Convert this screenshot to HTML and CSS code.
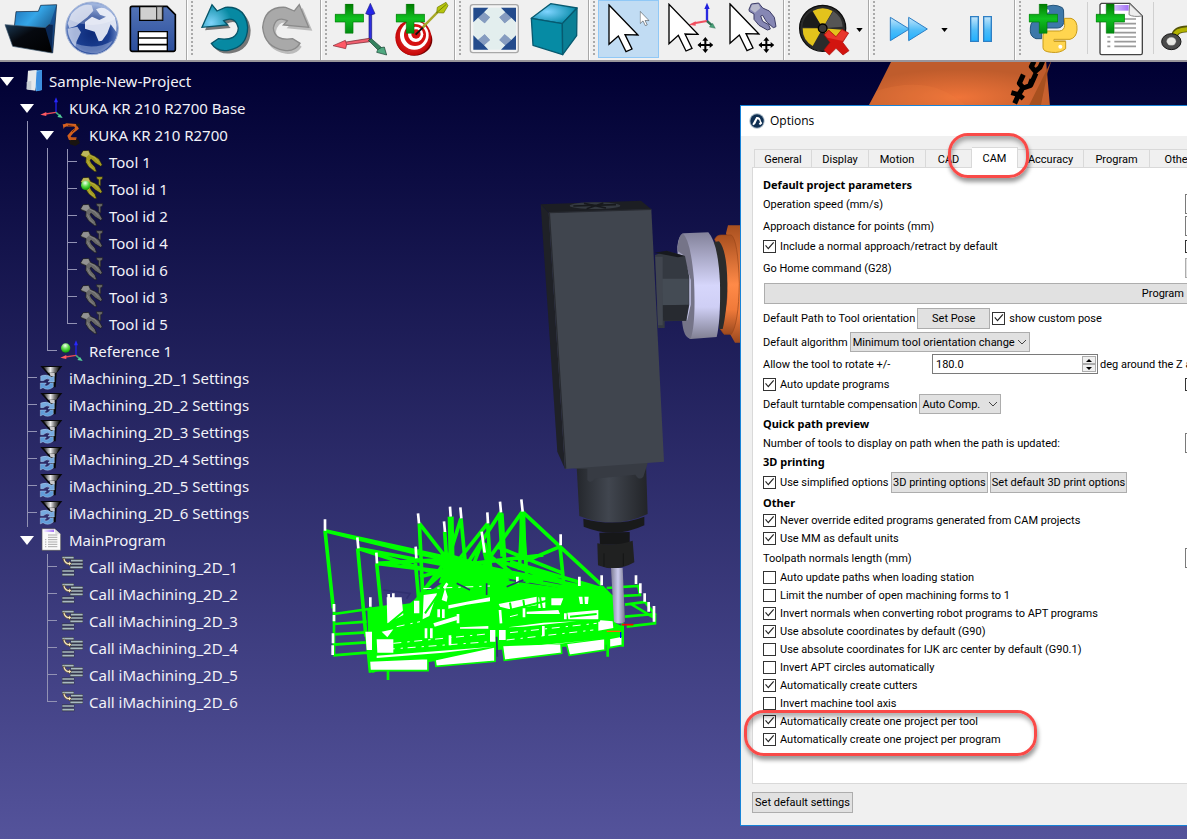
FILE: index.html
```html
<!DOCTYPE html>
<html lang="en">
<head>
<meta charset="utf-8">
<title>Sample-New-Project</title>
<link rel="stylesheet" href="styles.css">
</head>
<body>
<svg class="defs" aria-hidden="true">
  <defs>
    <linearGradient id="gFolder" x1="0" y1="0" x2="1" y2="1"><stop offset="0" stop-color="#1d6fb5"/><stop offset=".35" stop-color="#35a6e8"/><stop offset="1" stop-color="#04173c"/></linearGradient>
    <linearGradient id="gFront" x1="0" y1="0" x2="1" y2="1"><stop offset="0" stop-color="#1b3a55"/><stop offset=".4" stop-color="#06090f"/><stop offset="1" stop-color="#000"/></linearGradient>
    <radialGradient id="gGlobe" cx=".5" cy=".6" r=".55"><stop offset="0" stop-color="#0d2a78"/><stop offset=".6" stop-color="#1c3f92"/><stop offset="1" stop-color="#7f9bd2"/></radialGradient>
    <linearGradient id="gFloppy" x1="0" y1="0" x2="0" y2="1"><stop offset="0" stop-color="#5273b6"/><stop offset="1" stop-color="#2b4e9c"/></linearGradient>
    <radialGradient id="gUndo" cx=".2" cy=".4" r=".45"><stop offset="0" stop-color="#7fd4fa"/><stop offset="1" stop-color="#0789a2"/></radialGradient>
    <linearGradient id="gPlus" x1="0" y1="0" x2="0" y2="1"><stop offset="0" stop-color="#007a00"/><stop offset=".5" stop-color="#10c020"/><stop offset="1" stop-color="#008a10"/></linearGradient>
    <radialGradient id="gCube" cx=".35" cy=".4" r=".6"><stop offset="0" stop-color="#7fd4ff"/><stop offset="1" stop-color="#0e8fae"/></radialGradient>
    <linearGradient id="gPlay" x1="0" y1="0" x2="0" y2="1"><stop offset="0" stop-color="#c5e6fb"/><stop offset=".55" stop-color="#4fbcf8"/><stop offset="1" stop-color="#20b0ff"/></linearGradient>
    <linearGradient id="gPage" x1="0" y1="0" x2="1" y2="0"><stop offset="0" stop-color="#fff"/><stop offset=".15" stop-color="#efe8ff"/><stop offset="1" stop-color="#a371f5"/></linearGradient>
    <radialGradient id="gBall" cx=".45" cy=".25" r=".75"><stop offset="0" stop-color="#f0fff0"/><stop offset=".5" stop-color="#5fdc4a"/><stop offset="1" stop-color="#0c9a00"/></radialGradient>
    <linearGradient id="gSteel" x1="0" y1="0" x2="1" y2="0"><stop offset="0" stop-color="#111"/><stop offset=".45" stop-color="#eee"/><stop offset=".7" stop-color="#777"/><stop offset="1" stop-color="#111"/></linearGradient>
    <linearGradient id="gFlange" x1="0" y1="0" x2="0" y2="1"><stop offset="0" stop-color="#83829a"/><stop offset=".5" stop-color="#d6d6fb"/><stop offset=".7" stop-color="#cfcff5"/><stop offset="1" stop-color="#807f92"/></linearGradient>
    <linearGradient id="gOrange" x1="0" y1="0" x2="0" y2="1"><stop offset="0" stop-color="#a9501f"/><stop offset=".5" stop-color="#ff8a48"/><stop offset=".75" stop-color="#f07a3a"/><stop offset="1" stop-color="#9c4a1f"/></linearGradient>
    <radialGradient id="gArm" cx=".5" cy=".8" r=".6"><stop offset="0" stop-color="#ef7439"/><stop offset="1" stop-color="#bf5c2c"/></radialGradient>
    <linearGradient id="gSpindle" x1="0" y1="0" x2="1" y2="0"><stop offset="0" stop-color="#24272c"/><stop offset=".45" stop-color="#41464f"/><stop offset="1" stop-color="#222428"/></linearGradient>
    <linearGradient id="gCutter" x1="0" y1="0" x2="1" y2="0"><stop offset="0" stop-color="#7f7e96"/><stop offset=".5" stop-color="#ccccee"/><stop offset="1" stop-color="#77768c"/></linearGradient>
    <radialGradient id="gTarget" cx=".5" cy=".5" r=".5"><stop offset="0" stop-color="#ff5050"/><stop offset="1" stop-color="#c40606"/></radialGradient>
    <symbol id="plus" viewBox="0 0 88 90"><path d="M32 1H55V32H87V55H55V89H32V55H1V32H32Z" fill="url(#gPlus)" stroke="#007a08" stroke-width="2"/></symbol>
    <symbol id="cursor" viewBox="0 0 94 150"><path d="M3 4V122L31 97L54 144L72 136L51 93L90 94Z" fill="#fff" stroke="#000" stroke-width="4"/></symbol>
    <symbol id="move" viewBox="0 0 48 48"><path d="M24 0L33 11H27V21H37V15L48 24L37 33V27H27V37H33L24 48L15 37H21V27H11V33L0 24L11 15V21H21V11H15Z" fill="#000"/></symbol>
    <symbol id="i-frame" viewBox="0 0 66 81" overflow="visible"><path d="M48 52V20" stroke="#2020e8" stroke-width="4"/><path d="M48 7L42 22H54Z" fill="#2828ff"/><path d="M48 52L16 57" stroke="#e84a58" stroke-width="4"/><path d="M1 59L19 51L19 63Z" fill="#ff5a62"/><path d="M48 52L60 63" stroke="#3fae80" stroke-width="5"/><path d="M68 69L52 66L60 57Z" fill="#55d09a"/></symbol>
    <symbol id="i-grip" viewBox="0 0 66 81" overflow="visible"><path d="M2 17L9 5L26 4L32 16L44 21L57 30L67 48L62 52L46 42L34 31L30 33L34 42L45 54L50 68L44 68L26 54L17 40L18 26L4 21Z" fill="currentColor" stroke="#16161a" stroke-width="2"/><path d="M4 17L10 7L25 6L29 15L19 24Z" fill="#fff" opacity=".28"/><path d="M22 34L30 50L40 60" fill="none" stroke="#fff" stroke-width="3" opacity=".18"/><path d="M28 18L44 26L56 40" fill="none" stroke="#fff" stroke-width="3" opacity=".18"/></symbol>
    <symbol id="i-toolid" viewBox="0 0 66 81" overflow="visible"><use href="#i-grip" width="66" height="81"/><path d="M49 2H68L67 9L62 11V30L56 26V11L51 9Z" fill="currentColor" stroke="#222" stroke-width="2"/></symbol>
    <symbol id="i-settings" viewBox="0 0 66 81" overflow="visible"><path d="M1 3H67L60 12L50 24L47 67H35L32 40L22 26L9 12Z" fill="#08080a"/><path d="M10 6H58L49 23H25Z" fill="url(#gSteel)"/><path d="M28 24H44V34H32Z" fill="#c9c9cc"/><path d="M2 47V33Q20 26 35 37L43 32V51H24L30 44Q20 38 10 47Z" fill="#77aadf" stroke="#dcecff"/><path d="M40 53V66Q24 79 9 68L1 72V54H19L13 61Q23 67 31 54Z" fill="#5f9bd8" stroke="#dcecff"/></symbol>
    <symbol id="i-call" viewBox="0 0 66 81" overflow="visible"><g fill="none" stroke="#30333c" stroke-width="9"><path d="M6 11H42M32 20H69M32 30H69M30 40H69M6 51H43M6 62H43"/></g><g fill="none" stroke="#a9bac2" stroke-width="5"><path d="M7 11H41M33 20H68M33 30H68M31 40H68M7 51H42M7 62H42"/></g><path d="M14 12Q16 26 27 26V21L34 29L27 36V32Q12 31 9 14Z" fill="#fff0c8" stroke="#5b4a2c" stroke-width="2"/></symbol>
  </defs>
</svg>

<div class="toolbar" role="toolbar" aria-label="Main tools">
  <div class="group group-first">
    <button class="tool" aria-label="Open"><svg viewBox="3 0 183 180"><path d="M43 80L48 35L115 34L122 16L170 14L158 159Z" fill="url(#gFolder)" stroke="#061a33" stroke-width="2"/><path d="M15 74L136 83L148 73L160 74L156 159L38 139Z" fill="url(#gFront)" stroke="#3d566c" stroke-width="2"/><path d="M136 84L149 75L169 16L157 157Z" fill="#0d3d86" opacity=".6"/></svg></button>
    <button class="tool" aria-label="Online library"><svg viewBox="186 0 183 180"><circle cx="276" cy="85" r="79" fill="url(#gGlobe)" stroke="#a9b8d8" stroke-width="3"/><path d="M214 42Q245 8 275 16L280 32L262 52L248 62L228 78L208 84L203 70Z" fill="#cdd5ea" opacity=".9"/><path d="M288 28Q316 12 345 52Q352 75 349 96L332 73L322 100L306 122L296 124L284 95L255 86L255 66L276 50L298 60L318 50L300 44Z" fill="#e6eaf6" opacity=".95"/><path d="M203 86L232 80L243 97L230 124L226 140Q204 116 203 86Z" fill="#cbd5ec" opacity=".8"/><path d="M214 124Q276 156 338 122Q318 160 276 160Q235 158 214 124Z" fill="#b9c8e8" opacity=".45"/><path d="M206 58Q276 92 346 58Q330 10 276 9Q223 12 206 58Z" fill="#fff" opacity=".25"/></svg></button>
    <button class="tool" aria-label="Save"><svg viewBox="369 0 183 180"><path d="M396 19H501L526 44V148Q526 154 520 154H397Q391 154 391 148V25Q391 19 396 19Z" fill="url(#gFloppy)" stroke="#000" stroke-width="5"/><path d="M419 20H488V61H419Z" fill="#cfcfcf" stroke="#000" stroke-width="4"/><path d="M470 20H487V60H470Z" fill="#bdbdbd" stroke="#222" stroke-width="3"/><path d="M415 95H502V153H415Z" fill="#fff" stroke="#000" stroke-width="4"/><path d="M415 114H502M415 134H502" stroke="#000" stroke-width="5"/></svg></button>
  </div>
  <div class="group">
    <span class="handle"></span>
    <button class="tool" aria-label="Undo"><svg viewBox="588 0 183 180"><path d="M636 14L606 82L683 75L671 62Q706 46 715 84Q712 124 655 118L634 132Q650 156 685 151Q742 142 743 82Q737 18 676 22L651 33Z" fill="#777" transform="translate(9 9)"/><path d="M636 14L606 82L683 75L671 62Q706 46 715 84Q712 124 655 116L634 130Q650 156 685 151Q742 142 743 82Q737 18 676 22L651 33Z" fill="url(#gUndo)" stroke="#065468" stroke-width="4"/></svg></button>
    <button class="tool" aria-label="Redo"><svg viewBox="771 0 183 180"><path d="M903 14L932 82L855 75L867 62Q832 46 823 84Q826 124 883 116L900 130Q884 156 853 151Q794 142 788 82Q794 18 862 22L888 33Z" fill="#bbb" transform="translate(5 10)"/><path d="M898 14L926 82L850 75L862 62Q827 46 820 84Q823 124 878 116L900 130Q884 156 853 151Q794 142 788 82Q794 18 857 22L883 33Z" fill="#a9a9a9" stroke="#8a8a8a" stroke-width="4"/></svg></button>
  </div>
  <div class="group">
    <span class="handle"></span>
    <button class="tool" aria-label="Add reference frame"><svg viewBox="30 0 183 180"><path d="M147 120V38H155V120Z" fill="#3030e0" stroke="#15157a" stroke-width="2"/><path d="M151 10L137 41Q151 49 165 41Z" fill="#2525e8" stroke="#222280" stroke-width="2"/><path d="M148 115L72 127V135L150 125Z" fill="#f06070" stroke="#6a2028" stroke-width="2"/><path d="M39 137L76 121Q83 133 77 146Z" fill="#ff5966" stroke="#802a35" stroke-width="2"/><path d="M145 121L154 116L185 143L176 152Z" fill="#35815f" stroke="#143e2d" stroke-width="2"/><path d="M200 165L170 157Q173 143 193 141Z" fill="#50a880" stroke="#143e2d" stroke-width="2"/><use href="#plus" x="44" y="11" width="88" height="90"/></svg></button>
    <button class="tool" aria-label="Add target"><svg viewBox="213 0 183 180"><ellipse cx="283" cy="120" rx="54" ry="47" fill="#700"/><circle cx="280" cy="112" r="54" fill="url(#gTarget)"/><circle cx="283" cy="106" r="43" fill="#fff"/><circle cx="285" cy="105" r="33" fill="#d61111"/><circle cx="287" cy="103" r="23" fill="#fff"/><circle cx="288" cy="102" r="14" fill="#d61111"/><path d="M287 104L318 73" stroke="#111" stroke-width="6"/><path d="M308 82L352 37" stroke="#a8a828" stroke-width="7"/><path d="M350 38L352 22L378 7L384 17L371 39Z" fill="#b5c50d" stroke="#6b7600" stroke-width="2"/><path d="M350 38L379 13" stroke="#586200" stroke-width="2"/><use href="#plus" x="227" y="11" width="88" height="90"/></svg></button>
  </div>
  <div class="group">
    <span class="handle"></span>
    <button class="tool" aria-label="Fit all"><svg viewBox="432 0 183 180"><rect x="451" y="14" width="144" height="144" rx="8" fill="#f4f4f4" stroke="#a8a8a8" stroke-width="4"/><rect x="460" y="23" width="128" height="126" fill="#e3eeee"/><g fill="#234b8c"><path d="M460 23H505L492 37L510 52L494 70L474 53L460 67Z"/><path d="M588 23H543L556 37L538 52L554 70L574 53L588 67Z"/><path d="M460 149H505L492 136L510 120L494 103L474 120L460 106Z"/><path d="M588 149H543L556 136L538 120L554 103L574 120L588 106Z"/></g><path d="M492 37L510 52L494 70L474 53ZM556 37L538 52L554 70L574 53ZM492 136L510 120L494 103L474 120ZM556 136L538 120L554 103L574 120Z" fill="#fff" opacity=".45"/></svg></button>
    <button class="tool" aria-label="Isometric view"><svg viewBox="615 0 183 180"><g stroke="#075a70" stroke-width="4" stroke-linejoin="round"><path d="M634 55L692 11L771 24L727 71Z" fill="url(#gCube)"/><path d="M634 55L727 71L728 164L639 136Z" fill="#068ba4"/><path d="M727 71L771 24L770 107L728 164Z" fill="#0a7f95"/></g></svg></button>
  </div>
  <div class="group">
    <span class="handle"></span>
    <button class="tool selected" aria-label="Select" aria-pressed="true"><svg viewBox="24 0 183 180"><use href="#cursor" x="54" y="11" width="94" height="150"/><use href="#cursor" x="149" y="33" width="30" height="46"/></svg></button>
    <button class="tool" aria-label="Move reference"><svg viewBox="207 0 183 180"><path d="M351 63V23" stroke="#2a2ae0" stroke-width="7"/><path d="M351 8L343 27H359Z" fill="#2020dd"/><path d="M351 63L312 70" stroke="#f05060" stroke-width="6"/><path d="M296 74L317 64V77Z" fill="#f05060"/><path d="M351 63L366 76" stroke="#2a7052" stroke-width="7"/><path d="M376 85L358 81L368 70Z" fill="#48a078" stroke="#1f5a40"/><use href="#cursor" x="234" y="9" width="94" height="150"/><use href="#move" x="322" y="111" width="48" height="48"/></svg></button>
    <button class="tool" aria-label="Move tool"><svg viewBox="390 0 183 180"><path d="M477 28L484 12L506 9L518 24L538 33L553 52L558 80L550 83L530 66L518 46L512 48L518 64L536 74L541 87L532 90L507 76L492 58L492 42L478 34Z" fill="#8687b4" stroke="#3c3c66" stroke-width="3"/><path d="M481 28L486 14L505 12L511 24L495 38Z" fill="#b8b9cc"/><use href="#cursor" x="417" y="8" width="94" height="150"/><use href="#move" x="505" y="111" width="48" height="48"/></svg></button>
  </div>
  <div class="group">
    <span class="handle"></span>
    <button class="tool" aria-label="Check collisions"><svg viewBox="609 0 183 180"><circle cx="698" cy="85" r="69" fill="#2b2b2b" stroke="#0c0c0c" stroke-width="4"/><g fill="#e3c31c"><path d="M698 85L668 33Q698 16 728 33Z"/><path d="M698 85L638 85Q637 120 668 138Z"/><path d="M698 85L758 89Q756 118 728 137Z"/></g><path d="M698 85L637 80Q640 50 666 34Z" fill="#1b1b1b"/><path d="M698 85L758 80Q756 50 730 34Z" fill="#555"/><circle cx="698" cy="85" r="13" fill="#3a3a3a" stroke="#000" stroke-width="4"/><path d="M716 90L738 110L756 88L776 99L758 127L777 152L759 165L738 145L718 165L702 150L720 127L702 104Z" fill="#d2140f" stroke="#a80e0a" stroke-width="2"/><path d="M716 92L738 112L756 90L774 100L758 123L712 113L704 104Z" fill="#ff5a4a" opacity=".5"/></svg></button>
    <button class="more" aria-label="Collision options"><svg viewBox="0 0 8 5"><path d="M0 0H8L4 5Z" fill="#000"/></svg></button>
  </div>
  <div class="group">
    <span class="handle"></span>
    <button class="tool" aria-label="Fast simulation"><svg viewBox="-6 0 183 180"><g fill="url(#gPlay)" stroke="#2e7fc4" stroke-width="3" stroke-linejoin="round"><path d="M31 52L88 87L31 122Z"/><path d="M86 52L142 87L86 122Z"/></g></svg></button>
    <button class="more" aria-label="Speed options"><svg viewBox="0 0 8 5"><path d="M0 0H8L4 5Z" fill="#000"/></svg></button>
    <button class="tool" aria-label="Pause"><svg viewBox="213 0 183 180"><g fill="url(#gPlay)" stroke="#2e7fc4" stroke-width="4"><path d="M272 50H295V124H272ZM311 50H334V124H311Z"/></g></svg></button>
  </div>
  <div class="group group-last">
    <span class="handle"></span>
    <button class="tool" aria-label="Add Python program"><svg viewBox="432 0 183 180"><path d="M490 24Q520 8 547 23Q552 28 551 42V67Q549 83 533 84H501Q486 86 485 105V116H468Q448 110 451 84Q452 58 479 55H520V48H487V29Z" fill="#3d78a9" stroke="#24547b" stroke-width="3"/><path d="M553 55H573Q593 60 591 90Q589 113 570 118H522V124H557V146Q540 160 515 157Q489 155 489 143V108Q490 94 503 93H538Q553 92 554 76Z" fill="#ffd54f" stroke="#c89b1a" stroke-width="3"/><circle cx="541" cy="140" r="6" fill="#fff"/><circle cx="502" cy="33" r="5" fill="#fff"/><path d="M524 123H557" stroke="#c89b1a" stroke-width="3"/><use href="#plus" x="446" y="11" width="88" height="90"/></svg></button>
    <span class="rule"></span>
    <button class="tool" aria-label="Add program"><svg viewBox="630 0 183 180"><path d="M664 10H749L787 48V159Q787 164 782 164H665Q660 164 660 159V14Z" fill="#fff" stroke="#444" stroke-width="4"/><path d="M668 15H746V32H668Z" fill="url(#gPage)"/><path d="M749 12L786 48Q760 52 747 44Z" fill="#eee" stroke="#888" stroke-width="3"/><path d="M703 57H768M703 71H768M703 84H768M703 98H768M703 111H768M703 125H768M703 139H768M682 111H691M682 125H691M682 139H691" stroke="#9a9a9a" stroke-width="5"/><use href="#plus" x="647" y="11" width="88" height="90"/></svg></button>
    <span class="rule"></span>
    <button class="tool" aria-label="Add curve"><svg viewBox="828 0 183 180"><path d="M884 116Q880 84 930 87" fill="none" stroke="#54540a" stroke-width="20"/><path d="M884 112Q882 87 930 88" fill="none" stroke="#b3b300" stroke-width="13"/><ellipse cx="874" cy="125" rx="29" ry="24" fill="#4b4b4b" stroke="#151515" stroke-width="3"/><ellipse cx="874" cy="124" rx="14" ry="12" fill="#e8e8e4" stroke="#999"/></svg></button>
  </div>
</div>

<main class="station">
  <svg class="scene" viewBox="0 62 1187 777" preserveAspectRatio="xMinYMin slice" role="img" aria-label="Robot spindle over toolpath">
    <g transform="translate(740 60) scale(.33333)">
      <path d="M456 0H918L930 140H384L412 88Z" fill="url(#gArm)"/>
      <path d="M410 92Q580 40 680 140H386Z" fill="#f08040" opacity=".22"/>
      <path d="M935 0L865 140H902L922 40Z" fill="#a8501f"/>
      <path d="M882 4L874 20L886 34L900 22L908 4M850 44L838 70L850 84L872 76L888 40M876 58L868 80M846 88L836 104L814 98M836 104L850 116M836 104L824 130" fill="none" stroke="#000" stroke-width="15" stroke-linejoin="round"/>
    </g>
    <g transform="translate(520 180) scale(.33333)">
      <path d="M624 136H700V488H645L630 462Q660 300 618 160Z" fill="url(#gOrange)"/>
      <path d="M584 178Q590 165 604 165H634Q654 180 658 310Q656 430 634 463H612L600 446Q650 320 584 178Z" fill="url(#gOrange)" stroke="#9a4618" stroke-width="2"/>
      <path d="M581 186L597 184Q621 210 622 310Q620 400 608 447H597Q606 300 581 186Z" fill="#2a2c2c"/>
      <path d="M490 160L565 157Q595 190 600 310Q602 420 590 471L512 477Q480 470 472 200Q475 165 490 160Z" fill="url(#gFlange)"/>
      <path d="M488 160Q512 180 522 300Q528 430 512 476Q490 475 486 421H502L512 374V300L490 225L472 212Q474 170 488 160Z" fill="#757488"/>
      <path d="M405 225L440 213L495 228L508 292V374L499 422L434 424V444H414Z" fill="#343941"/><path d="M425 296H506V375H427Z" fill="#444b54"/><path d="M427 376L506 374L498 422H430Z" fill="#272a30"/><path d="M406 230H428V436H414Z" fill="#41464f"/><path d="M404 218L440 212L494 228L474 232Z" fill="#17191e"/>
      <path d="M170 860L378 848L383 1002Q282 1050 178 1008Z" fill="url(#gSpindle)"/>
      <path d="M160 866H202V900Q212 914 224 896L346 884Q358 904 370 890L383 850L300 830Z" fill="#373b43"/>
      <path d="M190 1016Q290 1042 373 1010V1036Q285 1078 191 1040Z" fill="#191a1b"/>
      <path d="M238 1058L329 1056V1094H240Z" fill="#161718"/><path d="M232 1090Q280 1100 338 1082L343 1147Q288 1178 234 1156Z" fill="#202121"/><path d="M252 1120V1160M310 1120V1158" stroke="#151616" stroke-width="3"/>
      <path d="M62 73L86 98L135 867L112 815Z" fill="#1f2127"/><path d="M62 73L363 62L394 88L86 98Z" fill="#1c1e23"/><ellipse cx="225" cy="77" rx="76" ry="10" fill="#343940"/><path d="M160 78L288 74M192 70L258 84M250 69L200 86" stroke="#17191d" stroke-width="5"/><path d="M86 98L394 88L432 845L135 867Z" fill="#40454e"/><path d="M88 98L137 866M87 98L394 88" stroke="#282b31" stroke-width="4"/>
    </g>
    <g transform="translate(310 480) scale(.33333)" fill="none" stroke="#0f0" stroke-width="11">
      <path d="M172 388L300 370L350 330L560 298L740 322L880 318L912 350L918 430L940 440L938 492L560 510L178 578Z" fill="#0f0" stroke="none"/>
      <path d="M45 152L70 385M45 152L420 235M45 152L320 220L870 330M143 205L168 470M143 205L860 340M143 205L440 300M200 250L215 395M200 250L400 275M200 250L370 240L700 300M328 130L342 420M328 130L412 238M315 235L330 400M404 155L412 270M453 115L467 260M453 115L392 310M533 130L550 400M533 130L430 260M572 97L588 300M572 97L460 270M637 95L628 270M637 95L652 310M637 95L750 200M637 95L470 330M750 200L762 320M750 200L875 315M750 200L650 242M515 190L480 280M524 215L620 290M330 290L490 250L700 225M340 330L440 240M380 390L430 280M240 420L420 300M560 200L760 280M560 240L790 320L880 350M600 245L870 325M650 260L840 340M290 400L410 240M420 260L520 300"/>
      <path d="M422 110L425 260M520 190L548 300M637 100L640 240M572 100L580 230" stroke-width="18"/>
      <path d="M400 215L480 240L560 270L600 300L540 340L400 340L395 290Z" fill="#0f0" stroke="none"/>
      <g stroke-width="8"><path d="M72 402L240 378M72 432L170 425M72 463L170 457M70 494L170 487M70 526L170 518M72 375V526M168 460L180 578M182 380L190 578M890 324L985 318L990 345L900 350M945 374L1005 366L1033 402L945 410M950 440L1035 430V400M960 370L1030 412M234 540V600M893 470V530M938 430V500"/></g>
      <g fill="#fff" stroke="#0f0" stroke-width="5"><path d="M178 543L354 535V572H180Z"/><path d="M375 539L555 500V544L378 559Z"/><path d="M577 496L753 490L755 520L583 541Z"/><path d="M769 490L885 475V510L778 526Z"/><path d="M898 475L937 468V496L898 503Z"/></g>
      <g fill="#fff" stroke="none"><path d="M230 352H275L280 405L232 430ZM341 345L381 340L358 408L338 418ZM312 362H328V400H312ZM566 372L680 350V376L600 388L570 380ZM724 355H760L752 376H724ZM772 398L865 390V418H775ZM865 420L908 424L910 444L865 452ZM650 395L745 390L750 402H650ZM200 478H250V518H202ZM395 360L405 325L413 350L410 365ZM415 376L540 352V364L470 374L415 386ZM370 430L440 408L442 420L374 440ZM450 442L535 438V446H450ZM592 442L700 428L800 424L640 440ZM200 527L550 500L400 518L200 534ZM540 450H556V485H540ZM567 450H587V480H567ZM590 505L850 480L740 492L590 508ZM166 455H186V510H170ZM215 455L250 448L232 472ZM685 352H706V384H685ZM806 350H836L834 372H810Z"/></g>
      <path d="M240 428L310 370M560 400L720 360M600 368L604 392M640 360L644 386M690 350L696 388M820 345L822 378M880 400L865 425M345 400L380 350M780 410L860 402" stroke-width="6"/>
      <g stroke="#fff" stroke-width="8"><path d="M45 118V152M142 172L145 205M199 218L201 250M324 100L327 130M317 200L319 235M402 124L405 156M420 80L422 110M451 82L454 115M532 97L534 130M570 65L573 97M634 58L638 95M515 155L524 218M752 163V196M875 286V316M978 286V312M991 310V340M1004 340V365M1016 366V395M1032 378V425M72 372V395M72 405V424M69 460V490M68 496V525M181 352V380M236 342V360M250 340V360M402 325L412 310M386 388V412M400 388V414M444 402V430M642 385V412M766 400V418M348 445V475M364 445V475M420 466V496M700 438V468M808 290V318M622 290V310M570 390L573 430"/></g>
      <path d="M340 326L540 318M250 490L530 462M230 508L540 485M600 458L860 430M590 480L850 450M260 440L330 425M600 410L640 400" stroke="#fff" stroke-width="3" stroke-dasharray="24 18 7 14"/>
      <path d="M220 330L300 340L290 356M590 320L640 300M440 310L480 330M530 310V345M560 470L562 530" stroke="#303070" stroke-width="5"/>
      <path d="M903 264H938L945 425Q930 436 912 426Z" fill="url(#gCutter)" stroke="none"/>
      <path d="M936 434H970" stroke="red" stroke-width="5"/><path d="M890 454H932" stroke="#f60" stroke-width="4"/><path d="M932 456V474" stroke="#00f" stroke-width="4"/>
    </g>
  </svg>

  <nav class="tree" aria-label="Station tree">
    <ul>
      <li class="root">
        <div class="item"><button class="fold" aria-label="Collapse"></button><svg class="icon" viewBox="0 0 66 81"><path d="M34 8L66 6V66L48 70Z" fill="#5eb2f5"/><path d="M46 14L66 6V66L50 70Z" fill="#3c8fe0"/><path d="M24 8L50 6L46 68L20 64L22 38Z" fill="#e6e8ea"/><path d="M20 42L34 38V67L20 64Z" fill="#c8ced4"/></svg><span>Sample-New-Project</span></div>
        <ul>
          <li class="open">
            <div class="item"><button class="fold" aria-label="Collapse"></button><svg class="icon"><use href="#i-frame"/></svg><span>KUKA KR 210 R2700 Base</span></div>
            <ul>
              <li class="open">
                <div class="item"><button class="fold" aria-label="Collapse"></button><svg class="icon" viewBox="0 0 66 81"><path d="M12 12L20 8L46 10L51 19L37 30L27 42L30 50L42 54" fill="none" stroke="#d2601e" stroke-width="9"/><path d="M24 10L42 14M36 30L44 22" stroke="#7c3209" stroke-width="3"/><path d="M8 7H20L15 13L11 21Z" fill="#d85f20"/><path d="M48 5H60V13H50ZM28 56L44 50L54 52L60 63L46 72L30 67Z" fill="#191410"/><path d="M27 46H50L48 54H30Z" fill="#c4571a"/></svg><span>KUKA KR 210 R2700</span></div>
                <ul>
                  <li><div class="item olive"><svg class="icon"><use href="#i-grip"/></svg><span>Tool 1</span></div></li>
                  <li><div class="item olive"><svg class="icon" viewBox="0 0 66 81"><use href="#i-toolid" width="66" height="81"/><circle cx="17" cy="28" r="14" fill="url(#gBall)"/></svg><span>Tool id 1</span></div></li>
                  <li><div class="item"><svg class="icon"><use href="#i-toolid"/></svg><span>Tool id 2</span></div></li>
                  <li><div class="item"><svg class="icon"><use href="#i-toolid"/></svg><span>Tool id 4</span></div></li>
                  <li><div class="item"><svg class="icon"><use href="#i-toolid"/></svg><span>Tool id 6</span></div></li>
                  <li><div class="item"><svg class="icon"><use href="#i-toolid"/></svg><span>Tool id 3</span></div></li>
                  <li><div class="item"><svg class="icon"><use href="#i-toolid"/></svg><span>Tool id 5</span></div></li>
                </ul>
              </li>
              <li><div class="item"><svg class="icon" viewBox="0 0 66 81"><use href="#i-frame" width="66" height="81"/><circle cx="17" cy="30" r="14" fill="url(#gBall)"/></svg><span>Reference 1</span></div></li>
            </ul>
          </li>
          <li><div class="item"><svg class="icon"><use href="#i-settings"/></svg><span>iMachining_2D_1 Settings</span></div></li>
          <li><div class="item"><svg class="icon"><use href="#i-settings"/></svg><span>iMachining_2D_2 Settings</span></div></li>
          <li><div class="item"><svg class="icon"><use href="#i-settings"/></svg><span>iMachining_2D_3 Settings</span></div></li>
          <li><div class="item"><svg class="icon"><use href="#i-settings"/></svg><span>iMachining_2D_4 Settings</span></div></li>
          <li><div class="item"><svg class="icon"><use href="#i-settings"/></svg><span>iMachining_2D_5 Settings</span></div></li>
          <li><div class="item"><svg class="icon"><use href="#i-settings"/></svg><span>iMachining_2D_6 Settings</span></div></li>
          <li class="root">
            <div class="item"><button class="fold" aria-label="Collapse"></button><svg class="icon" viewBox="0 0 66 81"><path d="M6 5H44L62 22V70H6Z" fill="#fafafa" stroke="#555" stroke-width="2"/><path d="M9 8H42V15H9Z" fill="url(#gPage)"/><path d="M44 5L62 22H46Z" fill="#ddd"/><path d="M24 24H52M24 31H52M24 38H52M24 45H52M24 52H52M24 59H52M15 38H19M15 45H19M15 52H19M15 59H19" stroke="#aaa" stroke-width="3"/></svg><span>MainProgram</span></div>
            <ul>
              <li><div class="item"><svg class="icon"><use href="#i-call"/></svg><span>Call iMachining_2D_1</span></div></li>
              <li><div class="item"><svg class="icon"><use href="#i-call"/></svg><span>Call iMachining_2D_2</span></div></li>
              <li><div class="item"><svg class="icon"><use href="#i-call"/></svg><span>Call iMachining_2D_3</span></div></li>
              <li><div class="item"><svg class="icon"><use href="#i-call"/></svg><span>Call iMachining_2D_4</span></div></li>
              <li><div class="item"><svg class="icon"><use href="#i-call"/></svg><span>Call iMachining_2D_5</span></div></li>
              <li><div class="item"><svg class="icon"><use href="#i-call"/></svg><span>Call iMachining_2D_6</span></div></li>
            </ul>
          </li>
        </ul>
      </li>
    </ul>
  </nav>

  <section class="dialog" role="dialog" aria-label="Options">
    <header class="titlebar"><svg class="logo" viewBox="0 0 48 48"><circle cx="24" cy="24" r="23" fill="#a9b9c6"/><circle cx="24" cy="24" r="20" fill="#0f2f52"/><path d="M10 34L22 12Q34 10 36 25L40 31L34 36L29 33L33 28Q31 18 25 19L19 32L14 37Z" fill="#fff"/></svg><span>Options</span></header>
    <div class="body">
      <div class="tabs" role="tablist">
        <button class="tab" role="tab">General</button><button class="tab" role="tab">Display</button><button class="tab" role="tab">Motion</button><button class="tab tab-short" role="tab">CAD</button><button class="tab tab-short current" role="tab" aria-selected="true">CAM</button><button class="tab tab-long" role="tab">Accuracy</button><button class="tab tab-long" role="tab">Program</button><button class="tab" role="tab">Other</button>
        <span class="callout callout-tab"></span>
      </div>
      <form class="panel">
        <h2 class="r18">Default project parameters</h2>
        <div class="row r20"><label for="speed">Operation speed (mm/s)</label><input class="edge" id="speed" type="text"></div>
        <div class="row r24"><label for="approach">Approach distance for points (mm)</label><input class="edge" id="approach" type="text"></div>
        <div class="row r16"><label><input type="checkbox" checked>Include a normal approach/retract by default</label><input class="edge edge-box" type="checkbox" aria-label="Retract"></div>
        <div class="row r28"><label for="home">Go Home command (G28)</label><input class="edge edge-soft" id="home" type="text"></div>
        <div class="row r22"><button class="btn wide" type="button">Program</button></div>
        <div class="row r28"><span>Default Path to Tool orientation</span><button class="btn pose" type="button">Set Pose</button><label><input type="checkbox" checked>show custom pose</label></div>
        <div class="row r20"><label for="algo">Default algorithm</label><span class="pick pick-long"><select id="algo"><option>Minimum tool orientation change</option></select><svg viewBox="0 0 10 6"><path d="M1 1L5 5L9 1" fill="none" stroke="#444"/></svg></span></div>
        <div class="row r24"><label class="lead" for="rotate">Allow the tool to rotate +/-</label><span class="spin"><input id="rotate" type="text" value="180.0"><span class="steps"><button type="button" aria-label="Increase"><svg viewBox="0 0 6 3"><path d="M3 0L6 3H0Z"/></svg></button><button type="button" aria-label="Decrease"><svg viewBox="0 0 6 3"><path d="M0 0H6L3 3Z"/></svg></button></span></span><span>deg around the Z a</span></div>
        <div class="row r16"><label><input type="checkbox" checked>Auto update programs</label><input class="edge edge-box" type="checkbox" aria-label="Update"></div>
        <div class="row r24"><label for="turn">Default turntable compensation</label><span class="pick pick-short"><select id="turn"><option>Auto Comp.</option></select><svg viewBox="0 0 10 6"><path d="M1 1L5 5L9 1" fill="none" stroke="#444"/></svg></span></div>
        <h2 class="r16">Quick path preview</h2>
        <div class="row r22"><label for="count">Number of tools to display on path when the path is updated:</label><input class="edge" id="count" type="text"></div>
        <h2 class="r16">3D printing</h2>
        <div class="row r24"><label class="simple"><input type="checkbox" checked>Use simplified options</label><button class="btn" type="button">3D printing options</button><button class="btn" type="button">Set default 3D print options</button></div>
        <h2 class="r18">Other</h2>
        <div class="row r16"><label><input type="checkbox" checked>Never override edited programs generated from CAM projects</label></div>
        <div class="row r20"><label><input type="checkbox" checked>Use MM as default units</label></div>
        <div class="row r20"><label for="normals">Toolpath normals length (mm)</label><input class="edge" id="normals" type="text"></div>
        <div class="row r18"><label><input type="checkbox">Auto update paths when loading station</label></div>
        <div class="row r18"><label><input type="checkbox">Limit the number of open machining forms to 1</label></div>
        <div class="row r18"><label><input type="checkbox" checked>Invert normals when converting robot programs to APT programs</label></div>
        <div class="row r18"><label><input type="checkbox" checked>Use absolute coordinates by default (G90)</label></div>
        <div class="row r18"><label><input type="checkbox">Use absolute coordinates for IJK arc center by default (G90.1)</label></div>
        <div class="row r18"><label><input type="checkbox">Invert APT circles automatically</label></div>
        <div class="row r18"><label><input type="checkbox" checked>Automatically create cutters</label></div>
        <div class="row r18"><label><input type="checkbox">Invert machine tool axis</label></div>
        <div class="marked">
          <div class="row r18"><label><input type="checkbox" checked>Automatically create one project per tool</label></div>
          <div class="row r18"><label><input type="checkbox" checked>Automatically create one project per program</label></div>
          <span class="callout callout-rows"></span>
        </div>
      </form>
      <button class="btn defaults" type="button">Set default settings</button>
    </div>
  </section>
</main>
</body>
</html>
```
FILE: styles.css
```css
* { box-sizing: border-box; }
body { margin: 0; min-height: 100vh; display: flex; flex-direction: column; overflow: hidden; font: 11px/15px Roboto, "Liberation Sans", sans-serif; color: #000; }
button, input, select { font: inherit; color: inherit; margin: 0; }
.defs { position: absolute; width: 0; height: 0; }

/* toolbar */
.toolbar { display: flex; flex: none; height: 62px; overflow: hidden; background: #f0f0f0; border-bottom: 2px solid #99959b; }
.group { display: flex; flex: none; padding-right: 2px; border-right: 1px solid #a8a8a8; box-shadow: 1px 0 #fff; margin-right: 1px; }
.group-first { padding-left: 1px; padding-right: 2px; }
.group-last { border: 0; box-shadow: none; }
.handle { width: 2px; margin: 1px 3px 5px; background: repeating-linear-gradient(#aaa 0 2px, #f0f0f0 2px 4px); }
.tool { flex: none; width: 61px; height: 60px; padding: 0; border: 0; background: none; overflow: hidden; }
.tool svg { display: block; width: 61px; height: 60px; }
.selected { height: 58px; background: #c1dcf3; box-shadow: inset 0 0 0 1px #90c8f6; }
.more { width: 12px; padding: 0; border: 0; background: none; }
.more svg { display: block; width: 7px; height: 4px; margin-left: 2px; overflow: visible; }
.rule { width: 1px; margin: 2px 2px 6px; background: #d0d0d0; }

/* 3D station */
.station { position: relative; flex: 1; min-height: 777px; overflow: hidden; background: linear-gradient(#000033, #54539b); }
.scene { position: absolute; left: 0; top: 0; width: 1187px; height: 777px; }

/* tree */
.tree { position: relative; width: 320px; padding-top: 6px; font: 15px/27px "Noto Sans", "Open Sans", sans-serif; }
.tree ul { list-style: none; margin: 0; padding: 0; }
.tree ul ul { padding-left: 20px; }
.tree li { position: relative; }
.tree li::before { content: ""; position: absolute; left: 7px; top: 0; bottom: 0; width: 1px; background: #9292b4; }
.tree li::after { content: ""; position: absolute; left: 7px; top: 12px; width: 10px; height: 1px; background: #9292b4; }
.tree li:last-child::before { bottom: auto; height: 13px; }
.tree .open::before { top: 26px; }
.tree .open::after, .tree .root::before, .tree .root::after { display: none; }
.item { display: flex; align-items: center; height: 27px; padding-left: 20px; white-space: nowrap; color: #f2f2f8; }
.icon { flex: none; width: 22px; height: 27px; margin-right: 7px; overflow: visible; color: #696969; }
.olive .icon { color: #a39b1e; }
.fold { width: 14px; height: 9px; margin: 0 6px 0 -20px; padding: 0; border: 0; background: #fff; clip-path: polygon(0 0, 100% 0, 50% 100%); }

/* options dialog */
.dialog { position: absolute; left: 740px; right: 0; top: 43px; overflow: hidden; background: #f0f0f0; border: 1px solid #1883d7; border-right: 0; white-space: nowrap; }
.titlebar { display: flex; align-items: center; gap: 5px; height: 30px; padding-left: 8px; background: #fff; font: 12px/16px "Open Sans", "Noto Sans", sans-serif; }
.logo { width: 16px; height: 16px; }
.body { padding: 11px 0 12px 11px; }
.tabs { position: relative; display: flex; align-items: flex-end; height: 20px; padding-left: 2px; }
.tab { flex: none; width: 57px; height: 18px; padding: 1px 0 0; background: #f0f0f0; border: 1px solid #d9d9d9; border-width: 1px 1px 0 0; }
.tab:first-child { width: 58px; border-left-width: 1px; }
.tab:last-child { width: 50px; }
.tab-short { width: 46px; }
.tab-long { width: 66px; }
.current { height: 21px; margin-bottom: -1px; background: #fff; z-index: 1; }
.panel { margin: 0; padding: 8px 0 35px 10px; background: #fff; border: 1px solid #d9d9d9; border-right: 0; }
.row { display: flex; align-items: center; gap: 2px; }
.row > * { flex: none; }
.row label { display: flex; align-items: center; gap: 4px; }
h2 { margin: 0; font: bold 11px/18px "Noto Sans", "Open Sans", sans-serif; }
h2.r16 { line-height: 16px; }
.r16 { height: 16px; }
.r18 { height: 18px; }
.r20 { height: 20px; }
.r22 { height: 22px; }
.r24 { height: 24px; }
.r28 { height: 28px; }
input[type="checkbox"] { appearance: none; flex: none; width: 13px; height: 13px; background: #fff; border: 1px solid #333; }
input[type="checkbox"]:checked::before { content: ""; display: block; width: 11px; height: 11px; background: #222; clip-path: polygon(10% 48%, 18% 42%, 38% 66%, 84% 14%, 92% 20%, 39% 82%); }
.edge { width: 62px; height: 20px; margin-left: auto; margin-right: -60px; border: 1px solid #7a7a7a; }
input.edge-box { width: 62px; }
.edge-soft { border-color: #adadad; background: #e1e1e1; }
.btn { height: 21px; padding: 0 1px; background: #e1e1e1; border: 1px solid #adadad; }
.row .wide { flex: 1; margin-left: 1px; padding-right: 3px; border-right: 0; text-align: right; }
.pose { width: 73px; }
.pick { position: relative; height: 20px; }
.pick select { appearance: none; display: block; width: 100%; height: 20px; padding: 0 2px; background: #e1e1e1; border: 1px solid #adadad; border-radius: 0; }
.pick svg { position: absolute; right: 3px; top: 7px; width: 10px; height: 6px; pointer-events: none; }
.pick-long { width: 180px; }
.pick-short { width: 82px; }
.row .lead { width: 167px; }
.spin { display: flex; width: 166px; height: 20px; padding: 1px; background: #fff; border: 1px solid #7a7a7a; }
.spin input { flex: 1; min-width: 0; padding: 0 2px; border: 0; outline: 0; background: none; }
.steps { display: flex; flex-direction: column; width: 14px; }
.steps button { display: flex; flex: 1; align-items: center; justify-content: center; padding: 0; background: #f0f0f0; border: 1px solid #adadad; }
.steps svg { width: 6px; height: 3px; }
.simple { width: 126px; }
.marked { position: relative; }
.defaults { display: block; width: 101px; margin-top: 8px; }
.callout { position: absolute; z-index: 2; border: 3px solid #f94a48; border-radius: 20px; box-shadow: 1px 4px 4px rgba(0, 0, 0, .4), inset 1px 4px 4px rgba(0, 0, 0, .3); pointer-events: none; }
.callout-tab { left: 196px; top: -14px; width: 81px; height: 45px; }
.callout-rows { left: -19px; top: -2px; width: 293px; height: 46px; }
```
